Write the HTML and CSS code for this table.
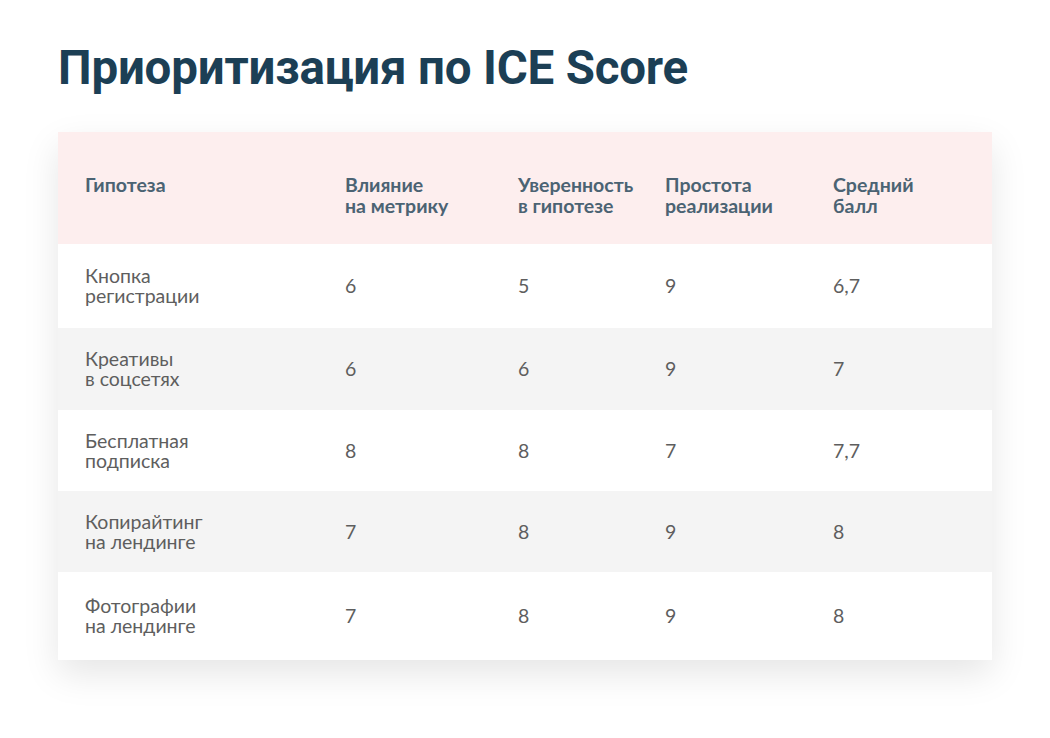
FILE: index.html
```html
<!DOCTYPE html>
<html lang="ru">
<head>
<meta charset="utf-8">
<link rel="stylesheet" href="styles.css">
</head>
<body>
<main class="page">
  <h1 class="title">Приоритизация по ICE Score</h1>
  <div class="card">
    <table class="ice">
      <thead>
        <tr>
          <th>Гипотеза</th>
          <th>Влияние<br>на метрику</th>
          <th>Уверенность<br>в гипотезе</th>
          <th>Простота<br>реализации</th>
          <th>Средний<br>балл</th>
        </tr>
      </thead>
      <tbody>
        <tr class="first"><td>Кнопка<br>регистрации</td><td>6</td><td>5</td><td>9</td><td>6,7</td></tr>
        <tr class="alt"><td>Креативы<br>в соцсетях</td><td>6</td><td>6</td><td>9</td><td>7</td></tr>
        <tr class="mid"><td>Бесплатная<br>подписка</td><td>8</td><td>8</td><td>7</td><td>7,7</td></tr>
        <tr class="alt mid"><td>Копирайтинг<br>на лендинге</td><td>7</td><td>8</td><td>9</td><td>8</td></tr>
        <tr class="last"><td>Фотографии<br>на лендинге</td><td>7</td><td>8</td><td>9</td><td>8</td></tr>
      </tbody>
    </table>
  </div>
</main>
</body>
</html>
```
FILE: styles.css
```css
html, body {
  margin: 0;
  padding: 0;
  background: #ffffff;
}
.page {
  padding: 40px 58px 80px 58px;
}
.title {
  margin: 0 0 36px 0;
  font-family: Roboto, "Liberation Sans", sans-serif;
  font-weight: 700;
  font-size: 47.5px;
  line-height: 56px;
  color: #1c3f55;
  letter-spacing: -0.2px;
}
.card {
  width: 934px;
  background: #ffffff;
  box-shadow: 0 14px 34px rgba(0, 0, 0, 0.10);
}
.ice {
  width: 934px;
  border-collapse: collapse;
  table-layout: fixed;
  font-family: Lato, "Open Sans", sans-serif;
  font-size: 19.5px;
}
.ice th {
  background: #fdeeee;
  color: #4b6373;
  font-weight: 700;
  text-align: left;
  vertical-align: top;
  line-height: 21px;
  padding: 42px 0 28px 0;
}
.ice td {
  color: #5e5e5e;
  line-height: 20px;
  padding: 21px 0;
  vertical-align: middle;
}
.ice th:nth-child(1), .ice td:nth-child(1) { width: 260px; padding-left: 27px; }
.ice th:nth-child(2), .ice td:nth-child(2) { width: 173px; }
.ice th:nth-child(3), .ice td:nth-child(3) { width: 147px; }
.ice th:nth-child(4), .ice td:nth-child(4) { width: 168px; }
.ice th:nth-child(5), .ice td:nth-child(5) { width: 159px; }
.ice tbody tr { background: #ffffff; }
.ice tbody tr.alt { background: #f4f4f4; }
.ice tbody tr.first td { padding-top: 22px; padding-bottom: 22px; }
.ice tbody tr.mid td { padding-top: 20.5px; padding-bottom: 20.5px; }
.ice tbody tr.last td { padding-top: 24px; padding-bottom: 24px; }
```
